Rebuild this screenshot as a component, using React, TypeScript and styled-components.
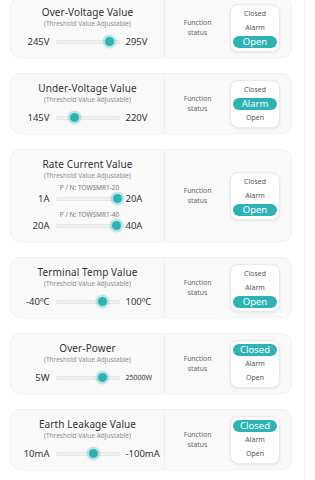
import { createGlobalStyle } from 'styled-components';
import styled from 'styled-components';

const GlobalStyle = createGlobalStyle`
  html, body {
    margin: 0;
    padding: 0;
    background: #ffffff;
    font-family: "Noto Sans", "Open Sans", sans-serif;
    color: #333333;
  }
`;

const TEAL = '#2db3b5';

const Page = styled.div`
  width: 305px;
  height: 480px;
  overflow: hidden;
  border-right: 1px solid #efefef;
  box-sizing: border-box;
  padding: 0 12px 0 10px;
  display: flex;
  flex-direction: column;
  gap: 15px;
`;

const Card = styled.section<{ $first?: boolean }>`
  margin-top: ${({ $first }) => ($first ? '-3px' : '0')};
  flex-shrink: 0;
  display: grid;
  grid-template-columns: 153px 1fr;
  background: #f9f9f9;
  border: 1px solid #f1f1f1;
  border-radius: 10px;
  box-sizing: border-box;
`;

const Left = styled.div`
  padding: 8px 0 9px;
  display: flex;
  flex-direction: column;
  align-items: center;
`;

const Title = styled.div`
  font-size: 10px;
  line-height: 13px;
  color: #333;
  letter-spacing: 0.1px;
`;

const Subtitle = styled.div`
  font-size: 6.5px;
  line-height: 9px;
  color: #8f8f8f;
  margin-bottom: 3px;
`;

const SliderBlock = styled.div`
  width: 100%;
  display: flex;
  flex-direction: column;
  align-items: center;

  & + & {
    margin-top: 5px;
  }
`;

const PartNo = styled.div`
  font-size: 6.5px;
  line-height: 9px;
  color: #777;
  margin-left: 4px;
`;

const SliderRow = styled.div<{ $tight?: boolean }>`
  width: 100%;
  display: grid;
  grid-template-columns: 1fr 64px 1fr;
  column-gap: 6px;
  align-items: center;
  height: 13px;
  margin-top: ${({ $tight }) => ($tight ? '0' : '4px')};
`;

const Value = styled.span<{ $side: 'left' | 'right'; $small?: boolean }>`
  font-size: ${({ $small }) => ($small ? '7px' : '9.5px')};
  line-height: 13px;
  color: #333;
  text-align: ${({ $side }) => $side};
  white-space: nowrap;
`;

const Track = styled.div`
  position: relative;
  height: 4px;
  border-radius: 3px;
  background: #f1f1f1;
  box-shadow: inset 0 0 0 1px #e6e6e6;
`;

const Thumb = styled.div`
  position: absolute;
  top: 50%;
  width: 9px;
  height: 9px;
  margin-left: -4.5px;
  margin-top: -4.5px;
  border-radius: 50%;
  background: ${TEAL};
  box-shadow: 0 0 0 2.5px rgba(45, 179, 181, 0.28);
`;

const Right = styled.div`
  border-left: 1px solid #eeeeee;
  display: grid;
  grid-template-columns: 65px 50px;
  align-items: center;
  padding-right: 13px;
`;

const StatusLabel = styled.div`
  font-size: 6.8px;
  line-height: 10px;
  color: #666;
  text-align: center;
`;

const Toggle = styled.div`
  width: 50px;
  box-sizing: border-box;
  padding: 2px;
  background: #ffffff;
  border: 1px solid #e8e8e8;
  border-radius: 8px;
  box-shadow: 0 1px 3px rgba(0, 0, 0, 0.08);
  display: flex;
  flex-direction: column;
  align-items: stretch;
`;

const Option = styled.div<{ $active: boolean }>`
  height: ${({ $active }) => ($active ? '12px' : '14px')};
  margin: ${({ $active }) => ($active ? '1px 0' : '0')};
  line-height: ${({ $active }) => ($active ? '12px' : '14px')};
  border-radius: 6px;
  text-align: center;
  font-size: ${({ $active }) => ($active ? '9.5px' : '7px')};
  color: ${({ $active }) => ($active ? '#ffffff' : '#555555')};
  background: ${({ $active }) => ($active ? TEAL : 'transparent')};
`;

type Slider = { min: string; max: string; pos: number; part?: string; smallMax?: boolean };
type Item = { title: string; sliders: Slider[]; status: 'Closed' | 'Alarm' | 'Open' };

const items: Item[] = [
  { title: 'Over-Voltage Value', sliders: [{ min: '245V', max: '295V', pos: 0.84 }], status: 'Open' },
  { title: 'Under-Voltage Value', sliders: [{ min: '145V', max: '220V', pos: 0.3 }], status: 'Alarm' },
  {
    title: 'Rate Current Value',
    sliders: [
      { min: '1A', max: '20A', pos: 0.97, part: 'P / N: TOWSMR1-20' },
      { min: '20A', max: '40A', pos: 0.95, part: 'P / N: TOWSMR1-40' },
    ],
    status: 'Open',
  },
  { title: 'Terminal Temp Value', sliders: [{ min: '-40ºC', max: '100ºC', pos: 0.73 }], status: 'Open' },
  { title: 'Over-Power', sliders: [{ min: '5W', max: '25000W', pos: 0.73, smallMax: true }], status: 'Closed' },
  { title: 'Earth Leakage Value', sliders: [{ min: '10mA', max: '-100mA', pos: 0.59 }], status: 'Closed' },
];

const options: Item['status'][] = ['Closed', 'Alarm', 'Open'];

export default function App() {
  return (
    <>
      <GlobalStyle />
      <Page>
        {items.map((it, i) => (
          <Card key={it.title} $first={i === 0}>
            <Left>
              <Title>{it.title}</Title>
              <Subtitle>(Threshold Value Adjustable)</Subtitle>
              {it.sliders.map((s) => (
                <SliderBlock key={s.min + s.max}>
                  {s.part && <PartNo>{s.part}</PartNo>}
                  <SliderRow $tight={!!s.part}>
                    <Value $side="right">{s.min}</Value>
                    <Track>
                      <Thumb style={{ left: `${s.pos * 100}%` }} />
                    </Track>
                    <Value $side="left" $small={s.smallMax}>{s.max}</Value>
                  </SliderRow>
                </SliderBlock>
              ))}
            </Left>
            <Right>
              <StatusLabel>
                Function
                <br />
                status
              </StatusLabel>
              <Toggle>
                {options.map((o) => (
                  <Option key={o} $active={o === it.status}>
                    {o}
                  </Option>
                ))}
              </Toggle>
            </Right>
          </Card>
        ))}
      </Page>
    </>
  );
}
